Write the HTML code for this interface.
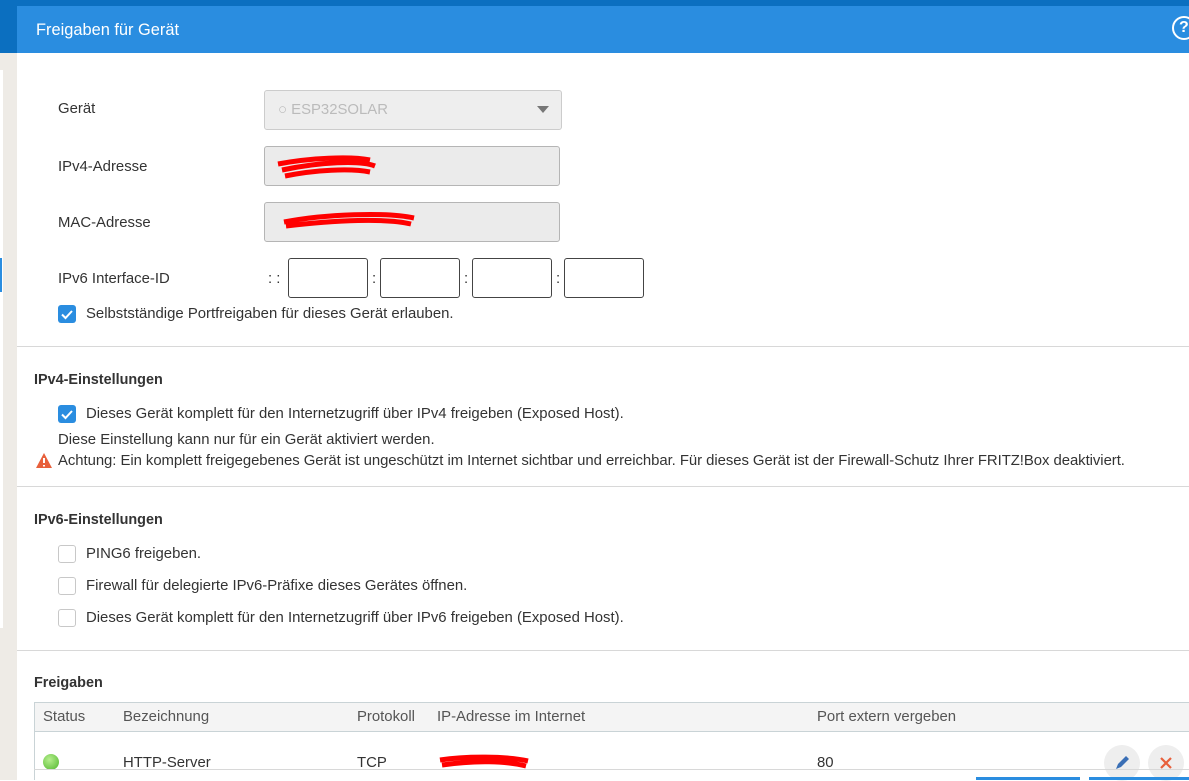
<!DOCTYPE html>
<html><head><meta charset="utf-8"><style>
*{box-sizing:border-box;margin:0;padding:0}
body{width:1189px;height:780px;overflow:hidden;background:#fff;font-family:"Liberation Sans",sans-serif;font-size:14.9px;color:#333;position:relative}
.a{position:absolute}
.t{position:absolute;white-space:nowrap}
.cb{position:absolute;width:18px;height:18px;border-radius:3px}
.on{background:#2a8de0}
.off{border:1.5px solid #c8c8c8;background:#fff}
.inp{position:absolute;border:1px solid #b5b5b5;border-radius:3px;background:#ebebeb}
.hr{position:absolute;left:17px;right:0;height:1px;background:#d8d8d8}
.box{position:absolute;top:258px;width:80px;height:40px;border:1px solid #444;border-radius:3px;background:#fff}
h3{position:absolute;font-size:14.4px;font-weight:bold;color:#333;white-space:nowrap}
</style></head><body>
<div class="a" style="left:0;top:0;width:1189px;height:6px;background:#0b6fc0"></div>
<div class="a" style="left:0;top:0;width:17px;height:53px;background:#0b6fc0"></div>
<div class="a" style="left:0;top:53px;width:17px;height:727px;background:#eeebe6"></div>
<div class="a" style="left:0;top:70px;width:3px;height:558px;background:#fff"></div>
<div class="a" style="left:0;top:258px;width:2px;height:34px;background:#2a8de0"></div>
<div class="a" style="left:17px;top:6px;width:1172px;height:47px;background:#2a8de0"></div>
<div class="t" style="left:36px;top:21px;color:#fff;font-size:16.4px">Freigaben für Gerät</div>
<div class="a" style="left:1172px;top:16px;width:24px;height:24px;border:2px solid #fff;border-radius:50%;color:#fff;font-weight:bold;font-size:16px;line-height:20px;padding-left:5px">?</div>

<div class="t" style="left:58px;top:101px">Gerät</div>
<div class="inp" style="left:264px;top:90px;width:298px;height:40px;border-color:#ccc;background:#eee"></div>
<div class="t" style="left:278px;top:102px;color:#bbb">○ ESP32SOLAR</div>
<div class="a" style="left:537px;top:106px;width:0;height:0;border-left:6px solid transparent;border-right:6px solid transparent;border-top:7px solid #777"></div>

<div class="t" style="left:58px;top:159px">IPv4-Adresse</div>
<div class="inp" style="left:264px;top:146px;width:296px;height:40px"></div>
<svg class="a" style="left:270px;top:152px" width="120" height="30"><path d="M8 12 C40 6 80 4 100 8 M12 18 C50 10 90 8 105 14 M15 24 C45 18 80 16 100 20" stroke="#f00" stroke-width="5" fill="none"/></svg>

<div class="t" style="left:58px;top:215px">MAC-Adresse</div>
<div class="inp" style="left:264px;top:202px;width:296px;height:40px"></div>
<svg class="a" style="left:276px;top:206px" width="150" height="30"><path d="M8 16 C50 8 110 6 138 12 M10 20 C60 14 110 12 135 18" stroke="#f00" stroke-width="5" fill="none"/></svg>

<div class="t" style="left:58px;top:271px">IPv6 Interface-ID</div>
<div class="t" style="left:268px;top:271px">: :</div>
<div class="box" style="left:288px"></div><div class="t" style="left:372px;top:271px">:</div>
<div class="box" style="left:380px"></div><div class="t" style="left:464px;top:271px">:</div>
<div class="box" style="left:472px"></div><div class="t" style="left:556px;top:271px">:</div>
<div class="box" style="left:564px"></div>

<svg class="cb on" style="left:58px;top:305px" viewBox="0 0 18 18"><path d="M4 9.5l3.5 3.5L14 6" stroke="#fff" stroke-width="2" fill="none"/></svg>
<div class="t" style="left:86px;top:306px">Selbstständige Portfreigaben für dieses Gerät erlauben.</div>
<div class="hr" style="top:346px"></div>

<h3 style="left:34px;top:372px">IPv4-Einstellungen</h3>
<svg class="cb on" style="left:58px;top:405px" viewBox="0 0 18 18"><path d="M4 9.5l3.5 3.5L14 6" stroke="#fff" stroke-width="2" fill="none"/></svg>
<div class="t" style="left:86px;top:406px">Dieses Gerät komplett für den Internetzugriff über IPv4 freigeben (Exposed Host).</div>
<div class="t" style="left:58px;top:432px">Diese Einstellung kann nur für ein Gerät aktiviert werden.</div>
<svg class="a" style="left:35px;top:452px" width="18" height="17"><path d="M9 1L17 16H1Z" fill="#e8603c"/><path d="M9 6v5M9 13v1.5" stroke="#fff" stroke-width="2"/></svg>
<div class="t" style="left:58px;top:453px;letter-spacing:-0.05px">Achtung: Ein komplett freigegebenes Gerät ist ungeschützt im Internet sichtbar und erreichbar. Für dieses Gerät ist der Firewall-Schutz Ihrer FRITZ!Box deaktiviert.</div>
<div class="hr" style="top:486px"></div>

<h3 style="left:34px;top:512px">IPv6-Einstellungen</h3>
<div class="cb off" style="left:58px;top:545px"></div>
<div class="t" style="left:86px;top:546px">PING6 freigeben.</div>
<div class="cb off" style="left:58px;top:577px"></div>
<div class="t" style="left:86px;top:578px">Firewall für delegierte IPv6-Präfixe dieses Gerätes öffnen.</div>
<div class="cb off" style="left:58px;top:609px"></div>
<div class="t" style="left:86px;top:610px">Dieses Gerät komplett für den Internetzugriff über IPv6 freigeben (Exposed Host).</div>
<div class="hr" style="top:650px"></div>

<h3 style="left:34px;top:675px">Freigaben</h3>
<div class="a" style="left:34px;top:702px;width:1155px;height:30px;background:#f4f4f4;border:1px solid #c9d3d6;border-right:none"></div>
<div class="t" style="left:43px;top:709px;color:#555">Status</div>
<div class="t" style="left:123px;top:709px;color:#555">Bezeichnung</div>
<div class="t" style="left:357px;top:709px;color:#555">Protokoll</div>
<div class="t" style="left:437px;top:709px;color:#555">IP-Adresse im Internet</div>
<div class="t" style="left:817px;top:709px;color:#555">Port extern vergeben</div>
<div class="a" style="left:34px;top:732px;width:1px;height:48px;background:#c9d3d6"></div>
<div class="a" style="left:43px;top:754px;width:16px;height:16px;border-radius:50%;background:radial-gradient(circle at 40% 35%,#b6ef8e,#4fb52c)"></div>
<div class="t" style="left:123px;top:755px">HTTP-Server</div>
<div class="t" style="left:357px;top:755px">TCP</div>
<svg class="a" style="left:436px;top:752px" width="100" height="20"><path d="M4 8 C30 4 70 4 92 9 M6 13 C40 8 70 9 90 14" stroke="#f00" stroke-width="5" fill="none"/></svg>
<div class="t" style="left:817px;top:755px">80</div>
<div class="a" style="left:1104px;top:745px;width:36px;height:36px;border-radius:50%;background:#eee"></div>
<svg class="a" style="left:1113px;top:754px" width="18" height="18"><path d="M3 15l2-5 8-8 3 3-8 8z" fill="#3a6fb5"/></svg>
<div class="a" style="left:1148px;top:745px;width:36px;height:36px;border-radius:50%;background:#eee"></div>
<svg class="a" style="left:1159px;top:756px" width="14" height="14"><path d="M2 2l10 10M12 2L2 12" stroke="#e8603c" stroke-width="2.2"/></svg>
<div class="a" style="left:34px;top:769px;width:1155px;height:1px;background:#d8d8d8"></div>
<div class="a" style="left:976px;top:777px;width:104px;height:3px;background:#2a8de0"></div>
<div class="a" style="left:1089px;top:777px;width:100px;height:3px;background:#2a8de0"></div>
</body></html>
